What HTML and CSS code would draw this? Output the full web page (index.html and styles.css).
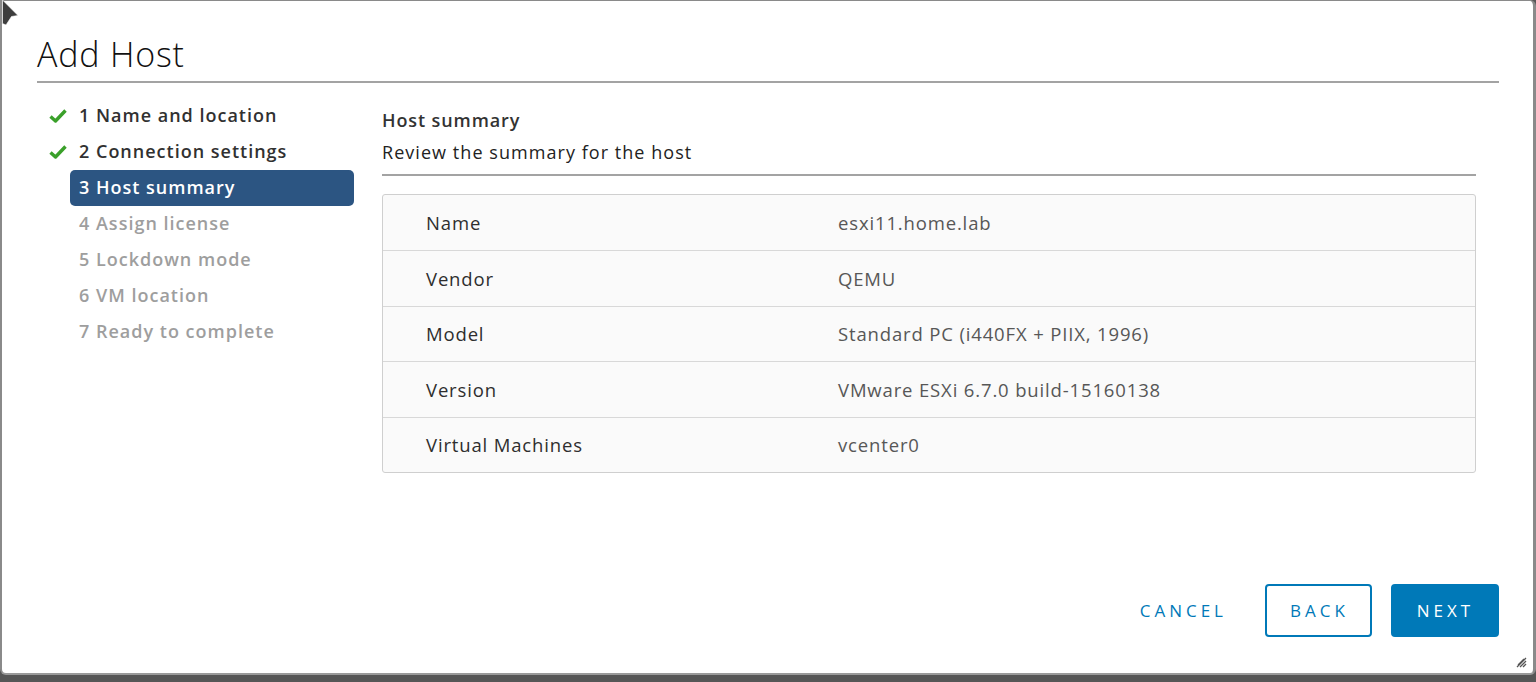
FILE: index.html
```html
<!DOCTYPE html>
<html>
<head>
<meta charset="utf-8">
<link rel="stylesheet" href="styles.css">
</head>
<body>
<div class="dialog">
  <header class="dlg-header">
    <h1 class="title">Add Host</h1>
  </header>
  <div class="dlg-body">
    <nav class="steps">
      <div class="step done"><span class="mark"><svg width="18" height="14" viewBox="0 0 18 14"><path d="M1.5 7.5 L6.5 12 L16.5 1.5" fill="none" stroke="#3aa02a" stroke-width="3.4" stroke-linejoin="round"/></svg></span><span class="label">1 Name and location</span></div>
      <div class="step done"><span class="mark"><svg width="18" height="14" viewBox="0 0 18 14"><path d="M1.5 7.5 L6.5 12 L16.5 1.5" fill="none" stroke="#3aa02a" stroke-width="3.4" stroke-linejoin="round"/></svg></span><span class="label">2 Connection settings</span></div>
      <div class="step active"><span class="mark"></span><span class="label">3 Host summary</span></div>
      <div class="step todo"><span class="mark"></span><span class="label">4 Assign license</span></div>
      <div class="step todo"><span class="mark"></span><span class="label">5 Lockdown mode</span></div>
      <div class="step todo"><span class="mark"></span><span class="label">6 VM location</span></div>
      <div class="step todo"><span class="mark"></span><span class="label">7 Ready to complete</span></div>
    </nav>
    <main class="content">
      <h2 class="sec-title">Host summary</h2>
      <p class="sec-desc">Review the summary for the host</p>
      <div class="summary">
        <div class="row"><span class="key">Name</span><span class="val">esxi11.home.lab</span></div>
        <div class="row"><span class="key">Vendor</span><span class="val">QEMU</span></div>
        <div class="row"><span class="key">Model</span><span class="val">Standard PC (i440FX + PIIX, 1996)</span></div>
        <div class="row"><span class="key">Version</span><span class="val">VMware ESXi 6.7.0 build-15160138</span></div>
        <div class="row"><span class="key">Virtual Machines</span><span class="val">vcenter0</span></div>
      </div>
    </main>
  </div>
  <footer class="dlg-footer">
    <button class="btn btn-link">CANCEL</button>
    <button class="btn btn-outline">BACK</button>
    <button class="btn btn-primary">NEXT</button>
  </footer>
  <svg class="grip" width="12" height="12" viewBox="0 0 12 12"><path d="M2 11 L11 2 M5 11 L11 5 M8 11 L11 8 M3 9 L9 3" stroke="#555" stroke-width="1.3"/></svg>
</div>
<svg class="cursor" width="22" height="28" viewBox="0 0 22 28"><path d="M2.5 0 L18 15.5 L11.5 16.5 L6 25 L2.5 23.5 Z" fill="#3d3d3d" stroke="#fff" stroke-opacity="0.6" stroke-width="1"/></svg>
</body>
</html>
```
FILE: styles.css
```css
html, body {
  margin: 0;
  padding: 0;
}
body {
  background: #565656;
  width: 1536px;
  height: 682px;
  overflow: hidden;
  position: relative;
  font-family: "Open Sans", "Liberation Sans", sans-serif;
}
.dialog {
  position: relative;
  box-sizing: border-box;
  width: 1536px;
  height: 675px;
  background: #fff;
  border-top: 1px solid #8a8a8a;
  border-left: 2px solid #8a8a8a;
  border-right: 3px solid #8a8a8a;
  border-bottom: 2px solid #9a9a9a;
  border-radius: 0 6px 6px 6px;
  display: flex;
  flex-direction: column;
  padding: 0 34px 0 35px;
}
.dlg-header {
  border-bottom: 2px solid #a3a3a3;
  height: 80px;
  display: flex;
  align-items: flex-end;
}
.title {
  margin: 0 0 7px 0;
  font-weight: 300;
  font-size: 34px;
  line-height: 40px;
  color: #111;
  letter-spacing: 0.8px;
}
.dlg-body {
  display: flex;
  flex: 1;
  padding-top: 15px;
}
.steps {
  width: 317px;
  flex: none;
  display: flex;
  flex-direction: column;
}
.step {
  display: flex;
  height: 36px;
  align-items: center;
}
.mark {
  width: 33px;
  flex: none;
  display: flex;
  justify-content: flex-start;
  padding-left: 12px;
  box-sizing: border-box;
}
.label {
  flex: 1;
  height: 36px;
  line-height: 35px;
  padding-left: 9px;
  border-radius: 5px;
  font-size: 18px;
  font-weight: 600;
  letter-spacing: 1px;
  color: #313131;
  white-space: nowrap;
}
.step.active .label {
  background: #2c5582;
  color: #fff;
}
.step.todo .label {
  color: #9e9e9e;
}
.content {
  margin-left: 28px;
  width: 1094px;
  flex: none;
}
.sec-title {
  margin: 9px 0 0 0;
  font-size: 18px;
  font-weight: 600;
  letter-spacing: 0.9px;
  line-height: 26px;
  color: #333;
}
.sec-desc {
  margin: 7px 0 0 0;
  font-size: 18px;
  letter-spacing: 1.05px;
  line-height: 24px;
  color: #222;
  padding-bottom: 10px;
  border-bottom: 2px solid #a3a3a3;
}
.summary {
  margin-top: 18px;
  border: 1px solid #cfcfcf;
  border-radius: 3px;
  background: #fafafa;
}
.row {
  display: flex;
  align-items: center;
  box-sizing: border-box;
  height: 55.4px;
  border-top: 1px solid #d8d8d8;
  font-size: 18.5px;
  letter-spacing: 0.85px;
}
.row:first-child {
  border-top: none;
}
.key {
  width: 455px;
  padding-left: 43px;
  box-sizing: border-box;
  flex: none;
  color: #2e2e2e;
}
.val {
  color: #575757;
}
.dlg-footer {
  display: flex;
  justify-content: flex-end;
  gap: 19px;
  padding-bottom: 36px;
}
.btn {
  height: 53px;
  box-sizing: border-box;
  padding: 0 17px 0 23px;
  font-family: "Open Sans", "Liberation Sans", sans-serif;
  font-size: 17px;
  font-weight: 500;
  letter-spacing: 4px;
  border-radius: 4px;
  cursor: pointer;
}
.btn-link {
  background: transparent;
  border: 2px solid transparent;
  color: #0079b8;
}
.btn-outline {
  width: 107px;
  padding: 0 0 0 2px;
  background: #fff;
  border: 2px solid #0079b8;
  color: #0079b8;
}
.btn-primary {
  width: 108px;
  padding: 0 0 0 1px;
  background: #0079b8;
  border: 2px solid #0079b8;
  color: #fff;
}
.grip {
  position: absolute;
  right: 6px;
  bottom: 5px;
}
.cursor {
  position: absolute;
  left: 0;
  top: 0;
}
```
